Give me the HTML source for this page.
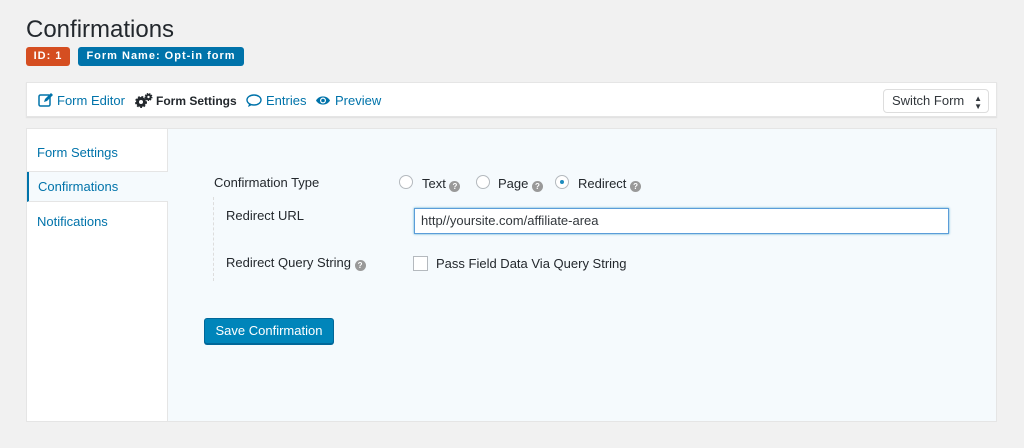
<!DOCTYPE html>
<html><head><style>
body{margin:0;width:1024px;height:448px;background:#f1f1f1;font-family:"Liberation Sans",sans-serif;position:relative;overflow:hidden;color:#23282d}
.abs{position:absolute}
h1{position:absolute;left:26px;top:16px;margin:0;font-size:24px;font-weight:400;color:#23282d}
.badge{position:absolute;top:47px;height:19px;line-height:19px;color:#fff;font-size:11px;letter-spacing:1px;border-radius:3px;padding:0 8px;font-weight:bold;white-space:nowrap;box-sizing:border-box}
.tb{left:26px;top:82px;width:971px;height:35px;background:#fff;box-shadow:0 1px 1px rgba(0,0,0,.08);border:1px solid #e5e5e5;box-sizing:border-box}
.tb a{position:absolute;top:10px;font-size:13px;color:#0073aa;white-space:nowrap}
.main{left:26px;top:128px;width:971px;height:294px;background:#f5fafd;border:1px solid #e5e5e5;box-sizing:border-box}
.side{left:0;top:0;width:140px;height:292px;background:#fff;border-right:1px solid #e5e5e5}
.si{position:absolute;left:0;width:140px;height:30px;font-size:13px;color:#0073aa;line-height:30px;padding-left:10px;box-sizing:border-box}
.lbl{font-size:13px;color:#23282d;white-space:nowrap}
.q{display:inline-block;width:11px;height:11px;border-radius:50%;background:#999;color:#fff;font-size:8px;line-height:11px;text-align:center;font-weight:bold;vertical-align:-1px}
.radio{width:14px;height:14px;border:1px solid #b4b9be;border-radius:50%;background:#fff;box-sizing:border-box}
</style></head><body>
<h1>Confirmations</h1>
<div class="badge" style="left:26px;background:#d54e21;width:44px;padding:0;text-align:center">ID: 1</div>
<div class="badge" style="left:78px;background:#0073aa;width:166px;padding:0;text-align:center">Form Name: Opt-in form</div>
<div class="abs tb">
<svg class="abs" style="left:11px;top:10px" width="15" height="14" viewBox="0 0 15 14"><rect x="1" y="2" width="11" height="11" rx="1.5" fill="none" stroke="#0073aa" stroke-width="1.5"/><path d="M6 9l1-3 6-6 2 2-6 6z" fill="#0073aa"/></svg>
<a style="left:30px">Form Editor</a>
<svg class="abs" style="left:108px;top:10px" width="18" height="15" viewBox="0 0 18 15"><circle cx="6" cy="9" r="3.5" fill="none" stroke="#23282d" stroke-width="3"/><circle cx="6" cy="9" r="5" fill="none" stroke="#23282d" stroke-width="2" stroke-dasharray="1.8 1.6"/><circle cx="13.5" cy="4" r="2.2" fill="none" stroke="#23282d" stroke-width="2"/><circle cx="13.5" cy="4" r="3.3" fill="none" stroke="#23282d" stroke-width="1.4" stroke-dasharray="1.3 1"/></svg>
<a style="left:129px;color:#23282d;font-weight:bold;font-size:12px;top:11px">Form Settings</a>
<svg class="abs" style="left:219px;top:11px" width="16" height="14" viewBox="0 0 16 14"><ellipse cx="8" cy="6" rx="7" ry="5" fill="none" stroke="#0073aa" stroke-width="1.4"/><path d="M3 10l-1 3 4-2" fill="#0073aa"/></svg>
<a style="left:239px">Entries</a>
<svg class="abs" style="left:288px;top:12px" width="16" height="11" viewBox="0 0 16 11"><path d="M1 5.5C4 0 12 0 15 5.5 12 11 4 11 1 5.5z" fill="#0073aa"/><circle cx="8" cy="5.5" r="3" fill="#fff"/><circle cx="8" cy="5.5" r="1.8" fill="#0073aa"/></svg>
<a style="left:308px">Preview</a>
<div class="abs" style="left:856px;top:6px;width:106px;height:24px;border:1px solid #ddd;border-radius:4px;box-sizing:border-box;font-size:13px;line-height:22px;padding-left:8px;color:#32373c">Switch Form <span style="position:absolute;right:6px;font-size:8px;line-height:8px;top:5px">▲<br>▼</span></div>
</div>
<div class="abs main">
<div class="abs side"></div>
<div class="si" style="top:9px;border-bottom:1px solid #e5e5e5;height:34px;line-height:30px">Form Settings</div>
<div class="si" style="top:43px;background:#f5fafd;border-left:2px solid #0073aa;padding-left:9px;width:141px;border-bottom:1px solid #e5e5e5">Confirmations</div>
<div class="si" style="top:78px">Notifications</div>
<div class="abs lbl" style="left:187px;top:46px">Confirmation Type</div>
<div class="abs radio" style="left:372px;top:46px"></div>
<div class="abs lbl" style="left:395px;top:47px">Text <span class="q">?</span></div>
<div class="abs radio" style="left:449px;top:46px"></div>
<div class="abs lbl" style="left:471px;top:47px">Page <span class="q">?</span></div>
<div class="abs radio" style="left:528px;top:46px"><div style="width:4px;height:4px;border-radius:50%;background:#1e8cbe;margin:4px"></div></div>
<div class="abs lbl" style="left:551px;top:47px">Redirect <span class="q">?</span></div>
<div class="abs" style="left:186px;top:68px;height:84px;border-left:1px dashed #ddd"></div>
<div class="abs lbl" style="left:199px;top:79px">Redirect URL</div>
<div class="abs" style="left:387px;top:79px;width:535px;height:26px;border:1px solid #5b9dd9;box-shadow:0 0 2px rgba(30,140,190,.8);background:#fff;box-sizing:border-box;font-size:13px;line-height:24px;padding-left:6px;color:#32373c">http//yoursite.com/affiliate-area</div>
<div class="abs lbl" style="left:199px;top:126px">Redirect Query String <span class="q">?</span></div>
<div class="abs" style="left:386px;top:127px;width:15px;height:15px;border:1px solid #b4b9be;background:#fff;box-sizing:border-box"></div>
<div class="abs lbl" style="left:409px;top:127px">Pass Field Data Via Query String</div>
<div class="abs" style="left:177px;top:189px;width:130px;height:26px;background:#0085ba;border:1px solid #006799;border-radius:3px;box-sizing:border-box;color:#fff;font-size:13px;line-height:24px;text-align:center;box-shadow:0 1px 0 #006799">Save Confirmation</div>
</div>
</body></html>
